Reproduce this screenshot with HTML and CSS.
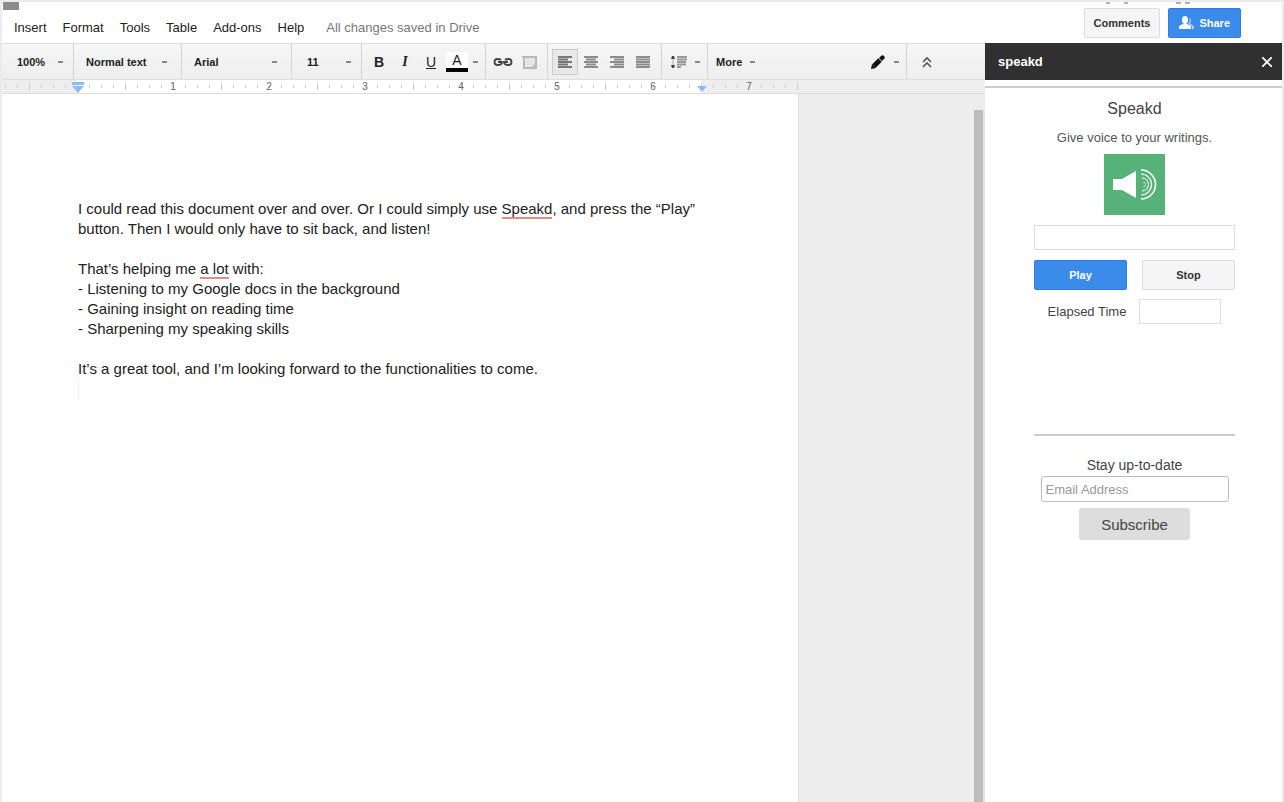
FILE: index.html
```html
<!DOCTYPE html>
<html lang="en">
<head>
    <meta charset="UTF-8">
    <meta name="viewport" content="width=device-width, initial-scale=1.0">
    <title>Speakd</title>
    <link rel="stylesheet" href="styles.css">
</head>
<body>

    <!-- Menu bar -->
    <header class="header">
        <span class="doc-tab"></span>
        <nav class="menu">
            <button>Insert</button>
            <button>Format</button>
            <button>Tools</button>
            <button>Table</button>
            <button>Add-ons</button>
            <button>Help</button>
        </nav>
        <span class="save-status">All changes saved in Drive</span>
        <div class="header-actions">
            <svg class="account" width="90" height="3" viewBox="0 0 90 3">
                <path d="M4 1h4M22 1h4M74 1h5M83 1h5" stroke="#999" stroke-width="1.6"/>
            </svg>
            <button class="btn">Comments</button>
            <button class="btn btn-primary btn-share">
                <svg width="16" height="14" viewBox="0 0 16 14" fill="#fff">
                    <ellipse cx="6" cy="4" rx="3" ry="4"/>
                    <path d="M0 13v-2c0-2 3-2 4-3h4c1 1 4 1 4 3v2z"/>
                    <path d="M10 2c2 0 3 3 1 5 1 2 4 2 4 4v2h-2c0-4-2-4-4-5 2-2 2-4 1-6z" opacity=".6"/>
                </svg>
                Share
            </button>
        </div>
    </header>

    <div class="workspace">
        <main class="editor">

            <!-- Toolbar -->
            <div class="toolbar">
                <div class="drop drop-zoom">
                    <select aria-label="Zoom"><option>100%</option></select>
                </div>
                <div class="drop drop-style">
                    <select aria-label="Styles"><option>Normal text</option></select>
                </div>
                <div class="drop drop-font">
                    <select aria-label="Font"><option>Arial</option></select>
                </div>
                <div class="drop drop-size">
                    <select aria-label="Font size"><option>11</option></select>
                </div>
                <div class="group">
                    <button class="tool bold" aria-label="Bold">B</button>
                    <button class="tool italic" aria-label="Italic">I</button>
                    <button class="tool underline" aria-label="Underline">U</button>
                    <button class="tool" aria-label="Text color"><span class="text-color">A</span></button>
                    <button class="caret" aria-label="Text color options"></button>
                </div>
                <div class="group">
                    <button class="tool" aria-label="Insert link">
                        <svg width="20" height="10" viewBox="0 0 20 10" fill="none" stroke="#444" stroke-width="1.8">
                            <path d="M8 3C7 2 6 2 4.500 2a3 3 0 0 0 0 6C7 8 9 7 9 5H5M12 3c1-1 2-1 3.500-1a3 3 0 0 1 0 6C13 8 11 7 11 5h4"/>
                        </svg>
                    </button>
                    <button class="tool" aria-label="Insert comment">
                        <svg width="18" height="16" viewBox="0 0 18 16">
                            <path d="M1 2h16v13h-3l-1 1-1-1H3V4z" fill="#b8b8b8"/>
                            <path d="M5 4h10v6l-3 3H5z" fill="#e6e6e6"/>
                        </svg>
                    </button>
                </div>
                <div class="group">
                    <button class="tool active" aria-label="Left align">
                        <svg width="14" height="12" viewBox="0 0 14 12" stroke="#777" stroke-width="1.8">
                            <path d="M0 1h14M0 3.5h10M0 6h14M0 8.5h10M0 11h14"/>
                        </svg>
                    </button>
                    <button class="tool" aria-label="Center align">
                        <svg width="14" height="12" viewBox="0 0 14 12" stroke="#8c8c8c" stroke-width="1.8">
                            <path d="M0 1h14M2 3.5h10M0 6h14M2 8.5h10M0 11h14"/>
                        </svg>
                    </button>
                    <button class="tool" aria-label="Right align">
                        <svg width="14" height="12" viewBox="0 0 14 12" stroke="#8c8c8c" stroke-width="1.8">
                            <path d="M0 1h14M4 3.5h10M0 6h14M4 8.5h10M0 11h14"/>
                        </svg>
                    </button>
                    <button class="tool" aria-label="Justify">
                        <svg width="14" height="12" viewBox="0 0 14 12" stroke="#8c8c8c" stroke-width="2.2">
                            <path d="M0 1h14M0 3.5h14M0 6h14M0 8.5h14M0 11h14"/>
                        </svg>
                    </button>
                </div>
                <div class="group">
                    <button class="tool" aria-label="Line spacing">
                        <svg width="18" height="14" viewBox="0 0 18 14">
                            <path d="M1 4l1-3h2l1 3zM1 10l1 3h2l1-3z" fill="#444"/>
                            <path d="M3 4v6" stroke="#aaa"/>
                            <path d="M7 2h10M7 4.5h10M7 7h9M7 9.5h9M7 12h4" stroke="#999" stroke-width="2.2"/>
                        </svg>
                    </button>
                    <button class="caret" aria-label="Line spacing options"></button>
                </div>
                <button class="more">More</button>
                <div class="group mode">
                    <button class="tool" aria-label="Editing mode">
                        <svg width="16" height="16" viewBox="0 0 16 16">
                            <path d="M4 12l6-6" stroke="#111" stroke-width="5"/>
                            <path d="M1 15l1-5 4 4zM9 4l2-2c1-1 2-1 3 0s1 2 0 3l-2 2z" fill="#111"/>
                        </svg>
                    </button>
                    <button class="caret" aria-label="Mode options"></button>
                </div>
                <button class="tool collapse" aria-label="Hide the menus">
                    <svg width="10" height="12" viewBox="0 0 10 12" fill="none" stroke="#555" stroke-width="1.6">
                        <path d="M1 6l4-4 4 4M1 11l4-4 4 4"/>
                    </svg>
                </button>
            </div>

            <!-- Ruler -->
            <div class="ruler">
                <div class="ruler-text"></div>
                <div class="ruler-scale">
                    <span>1</span>
                    <span>2</span>
                    <span>3</span>
                    <span>4</span>
                    <span>5</span>
                    <span>6</span>
                    <span>7</span>
                </div>
                <svg class="indent indent-left" width="12" height="11" viewBox="0 0 12 11" fill="#8fbcf0">
                    <path d="M0 0h12v3H0zM0 4h12L6 11z"/>
                </svg>
                <svg class="indent indent-right" width="12" height="11" viewBox="0 0 12 11" fill="#8fbcf0">
                    <path d="M1 4h10L6 10z"/>
                </svg>
            </div>

            <!-- Document -->
            <div class="canvas">
                <article class="page">
                    <p>I could read this document over and over. Or I could simply use <span class="typo">Speakd</span>, and press the “Play”<br>
                    button. Then I would only have to sit back, and listen!</p>
                    <p>That’s helping me <span class="typo">a lot</span> with:<br>
                    - Listening to my Google docs in the background<br>
                    - Gaining insight on reading time<br>
                    - Sharpening my speaking skills</p>
                    <p>It’s a great tool, and I’m looking forward to the functionalities to come.</p>
                    <div class="cursor"></div>
                </article>
                <div class="scrollbar"></div>
            </div>
        </main>

        <!-- Speakd sidebar -->
        <aside class="sidebar">
            <div class="sidebar-title">
                <span>speakd</span>
                <button aria-label="Close">
                    <svg width="10" height="10" viewBox="0 0 10 10" stroke="#fff" stroke-width="1.8">
                        <path d="M0 0l10 10M10 0l-10 10"/>
                    </svg>
                </button>
            </div>
            <div class="panel">
                <h1>Speakd</h1>
                <p class="tagline">Give voice to your writings.</p>
                <svg class="logo" width="61" height="61" viewBox="0 0 61 61">
                    <rect width="61" height="61" fill="#57b27a"/>
                    <path d="M9 25h9l14-8v27l-14-8H9z" fill="#fff"/>
                    <g fill="none" stroke="#fff">
                        <path d="M37 16a14.5 14.5 0 0 1 0 29" stroke-width="1.6"/>
                        <path d="M37 20a10.5 10.5 0 0 1 0 21" stroke-width="1.1"/>
                        <path d="M38 24a6.5 6.5 0 0 1 0 13" stroke-width="1"/>
                        <path d="M39 28a2.5 2.5 0 0 1 0 5" stroke-width=".6"/>
                    </g>
                </svg>
                <input class="field" type="text" aria-label="Status">
                <div class="controls">
                    <button class="btn btn-primary">Play</button>
                    <button class="btn">Stop</button>
                </div>
                <div class="elapsed">
                    <label for="elapsed">Elapsed Time</label>
                    <input class="field" type="text" id="elapsed">
                </div>
                <form class="newsletter">
                    <label for="email">Stay up-to-date</label>
                    <input type="email" id="email" placeholder="Email Address">
                    <button type="button">Subscribe</button>
                </form>
            </div>
        </aside>
    </div>

</body>
</html>
```

FILE: styles.css
```css
* {
    margin: 0;
    padding: 0;
    box-sizing: border-box;
}

body {
    display: flex;
    flex-direction: column;
    min-height: 100vh;
    border: 2px solid #ebebeb;
    border-bottom: none;
    background-color: #fff;
    color: #222;
    font-family: "Liberation Sans", Arial, sans-serif;
    font-size: 13px;
}

button,
input,
select {
    font-family: inherit;
    color: inherit;
}

button {
    border: none;
    background: none;
    cursor: pointer;
}

svg {
    display: block;
}

/* Header */
.header {
    position: relative;
    display: flex;
    align-items: center;
    height: 41px;
    padding: 10px 41px 0 12px;
}

.doc-tab {
    position: absolute;
    top: 0;
    left: 1px;
    width: 16px;
    height: 8px;
    background-color: #8c8c8c;
}

.menu {
    display: flex;
    gap: 16px;
}

.menu button {
    font-size: 13px;
}

.save-status {
    margin-left: 22px;
    color: #777;
}

.header-actions {
    display: flex;
    gap: 8px;
    margin-left: auto;
    margin-top: -10px;
}

.account {
    position: absolute;
    top: 0;
    right: 90px;
}

.btn {
    height: 30px;
    padding: 0 9px;
    border: 1px solid #dcdcdc;
    border-radius: 2px;
    background-color: #f5f5f5;
    color: #333;
    font-size: 11px;
    font-weight: bold;
}

.btn-primary {
    border-color: #3079ed;
    background-color: #3a8bea;
    color: #fff;
}

.btn-share {
    display: flex;
    align-items: center;
    gap: 4px;
    padding: 0 10px;
}

/* Workspace */
.workspace {
    display: flex;
    flex: 1;
}

.editor {
    display: flex;
    flex: 1;
    flex-direction: column;
    min-width: 0;
}

/* Toolbar */
.toolbar {
    display: flex;
    height: 37px;
    border-top: 1px solid #ddd;
    border-bottom: 1px solid #ddd;
    background: linear-gradient(#f6f6f6, #eee);
}

.drop {
    position: relative;
    border-right: 1px solid #d4d4d4;
}

.drop select {
    width: 100%;
    height: 100%;
    padding-left: 12px;
    appearance: none;
    border: none;
    background: none;
    font-size: 11px;
    font-weight: bold;
}

.drop::after,
.caret::after,
.more::after {
    content: "";
    display: block;
    width: 5px;
    border-top: 2px solid #888;
}

.drop::after {
    position: absolute;
    top: 17px;
    right: 10px;
    pointer-events: none;
}

.drop-zoom {
    width: 72px;
}

.drop-zoom select,
.drop-size select {
    padding-left: 15px;
}

.drop-style {
    width: 108px;
}

.drop-font {
    width: 110px;
}

.drop-style::after,
.drop-font::after {
    right: 14px;
}

.drop-size {
    width: 70px;
}

.group {
    display: flex;
    align-items: center;
    padding: 0 5px 0 4px;
    border-right: 1px solid #d4d4d4;
}

.tool {
    display: flex;
    align-items: center;
    justify-content: center;
    width: 26px;
    height: 26px;
    font-size: 14px;
}

.bold {
    font-weight: bold;
}

.italic {
    font-family: "Liberation Serif", serif;
    font-style: italic;
    font-weight: bold;
}

.underline {
    text-decoration: underline;
}

.text-color {
    width: 22px;
    border-bottom: 4px solid #000;
    background-color: #fff;
    line-height: 16px;
}

.active {
    border: 1px solid #ccc;
    background-color: #e8e8e8;
}

.caret {
    display: flex;
    align-items: center;
    justify-content: center;
    width: 10px;
    height: 26px;
}

.more {
    display: flex;
    align-items: center;
    gap: 8px;
    padding-left: 8px;
    font-size: 11px;
    font-weight: bold;
}

.mode {
    margin-left: auto;
}

.collapse {
    align-self: center;
    margin: 0 45px 0 7px;
}

/* Ruler */
.ruler {
    position: relative;
    height: 14px;
    border-bottom: 1px solid #ddd;
    background-color: #eee;
}

.ruler-text {
    width: 625px;
    height: 13px;
    margin-left: 75px;
    background-color: #fff;
}

/* Eight ticks to the inch, a taller one on the half */
.ruler-scale {
    position: absolute;
    top: 0;
    left: 0;
    display: flex;
    width: 799px;
    height: 13px;
    padding-left: 123px;
    background-image:
        repeating-linear-gradient(90deg, #ccc 0 1px, transparent 1px 96px),
        repeating-linear-gradient(90deg, #ccc 0 1px, transparent 1px 12px);
    background-position: 27px 3px, 3px 5px;
    background-repeat: no-repeat;
    background-size: 100% 7px, 100% 3px;
}

.ruler-scale span {
    width: 96px;
    color: #666;
    font-size: 10px;
    line-height: 13px;
    text-align: center;
}

.indent {
    position: absolute;
    top: 2px;
}

.indent-left {
    left: 70px;
}

.indent-right {
    left: 694px;
}

/* Document */
.canvas {
    display: flex;
    flex: 1;
    justify-content: space-between;
    background-color: #ededed;
}

.page {
    width: 797px;
    padding: 105px 96px 0 76px;
    border-right: 1px solid #ddd;
    background-color: #fff;
    font-size: 15px;
    line-height: 20px;
}

.page p {
    margin-bottom: 20px;
}

.typo {
    border-bottom: 2px solid #e88a8a;
}

.cursor {
    width: 1px;
    height: 20px;
    margin-top: -20px;
    background-color: #eee;
}

.scrollbar {
    width: 11px;
    margin-top: 16px;
    border-right: 2px solid #e4e4e4;
    background-color: #bdbdbd;
}

/* Sidebar */
.sidebar {
    width: 297px;
}

.sidebar-title {
    display: flex;
    align-items: center;
    justify-content: space-between;
    height: 37px;
    padding: 0 10px 0 13px;
    background-color: #303030;
    color: #fff;
    font-size: 13px;
    font-weight: bold;
}

.panel {
    display: flex;
    flex-direction: column;
    align-items: center;
    margin-top: 6px;
    padding: 11px 47px 0 49px;
    border-top: 2px solid #ccc;
    color: #444;
}

.panel h1 {
    font-size: 16px;
    font-weight: normal;
    line-height: 20px;
}

.tagline {
    margin: 10px 0 7px;
    color: #555;
    line-height: 18px;
}

.logo {
    margin-bottom: 10px;
}

.field {
    width: 100%;
    height: 25px;
    padding: 0 4px;
    border: 1px solid #ddd;
}

.controls {
    display: flex;
    gap: 15px;
    width: 100%;
    margin: 10px 0 9px;
}

.controls .btn {
    flex: 1;
}

.elapsed {
    display: flex;
    align-items: center;
    gap: 13px;
}

.elapsed .field {
    width: 82px;
}

.newsletter {
    display: flex;
    flex-direction: column;
    align-items: center;
    width: 100%;
    margin-top: 110px;
    padding-top: 19px;
    border-top: 2px solid #ccc;
}

.newsletter label {
    font-size: 14px;
    line-height: 21px;
}

.newsletter input {
    width: 188px;
    height: 26px;
    padding: 0 4px;
    border: 1px solid #bbb;
    border-radius: 3px;
    font-size: 13px;
}

.newsletter input::placeholder {
    color: #999;
}

.newsletter button {
    height: 32px;
    margin-top: 6px;
    padding: 0 22px;
    border-radius: 3px;
    background-color: #ddd;
    font-size: 15px;
}
```
